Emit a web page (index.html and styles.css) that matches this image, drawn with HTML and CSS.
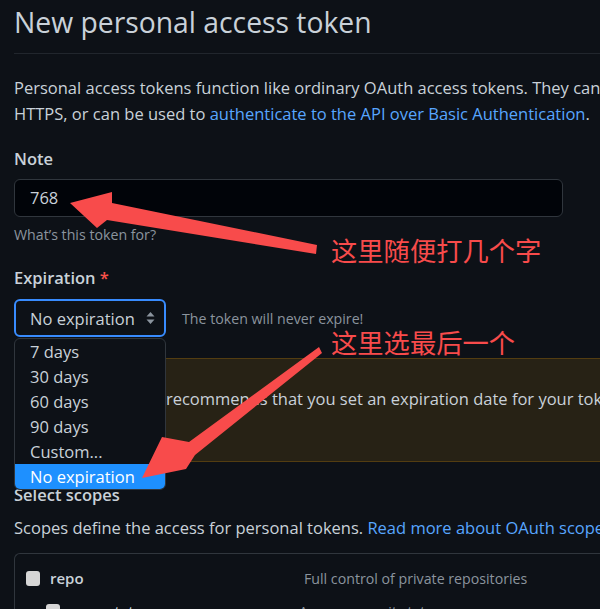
FILE: index.html
```html
<!DOCTYPE html>
<html lang="en">
<head>
<meta charset="utf-8">
<title>New personal access token</title>
<link rel="stylesheet" href="styles.css">
</head>
<body>
<div class="page">
  <div class="subhead"><h1 class="subhead-title">New personal access token</h1></div>
  <p class="intro">Personal access tokens function like ordinary OAuth access tokens. They can be used instead of a password for Git over<br>HTTPS, or can be used to <a class="link" href="#">authenticate to the API over Basic Authentication</a>.</p>

  <div class="field field-note">
    <div class="label">Note</div>
    <div class="input">768</div>
    <div class="hint hint-note">What’s this token for?</div>
  </div>

  <div class="field field-exp">
    <div class="label">Expiration <span class="req">*</span></div>
    <div class="select-row">
      <div class="select-wrap">
        <div class="select">
          <span>No expiration</span>
          <svg class="select-icon" width="9" height="14" viewBox="0 0 9 14"><path d="M4.5 1 L8.5 5.5 L0.5 5.5 Z M4.5 13 L8.5 8.5 L0.5 8.5 Z" fill="#8b949e"/></svg>
        </div>
        <ul class="menu">
          <li class="menu-item">7 days</li>
          <li class="menu-item">30 days</li>
          <li class="menu-item">60 days</li>
          <li class="menu-item">90 days</li>
          <li class="menu-item">Custom...</li>
          <li class="menu-item selected">No expiration</li>
        </ul>
      </div>
      <span class="hint">The token will never expire!</span>
    </div>
  </div>

  <div class="flash">GitHub strongly recommends that you set an expiration date for your token to help keep your information secure.</div>

  <div class="label label-scopes">Select scopes</div>
  <p class="scopes-desc">Scopes define the access for personal tokens. <a class="link" href="#">Read more about OAuth scopes.</a></p>

  <div class="scopes">
    <div class="scope-row">
      <span class="check"></span>
      <span class="scope-name">repo</span>
      <span class="scope-info">Full control of private repositories</span>
    </div>
    <div class="scope-row child">
      <span class="check"></span>
      <span class="scope-name normal">repo:status</span>
      <span class="scope-info">Access commit status</span>
    </div>
  </div>
</div>

<svg class="annot" width="600" height="609" viewBox="0 0 600 609">
  <polygon points="70,203 112,192 112,203 317,245 316,254 107,220 97,228" fill="#f84b4b"/>
  <polygon points="319,347 322,353 195,455 186,469 142,478 162,437 189,442" fill="#f84b4b"/>
</svg>
<div class="note note-1">这里随便打几个字</div>
<div class="note note-2">这里选最后一个</div>
</body>
</html>
```
FILE: styles.css
```css
html, body {
  margin: 0;
  padding: 0;
}
body {
  background: #0d1117;
  color: #c9d1d9;
  font-family: "Open Sans", "Noto Sans", sans-serif;
  font-size: 16.5px;
  width: 600px;
  height: 609px;
  overflow: hidden;
  position: relative;
}
.page {
  width: 1000px;
  padding-left: 14px;
}
.subhead {
  border-bottom: 1px solid #21262d;
  padding-bottom: 9px;
}
.subhead-title {
  margin: 0;
  font-size: 28.3px;
  font-weight: 400;
  line-height: 44px;
  color: #c9d1d9;
}
.intro {
  margin: 21px 0 0;
  line-height: 26px;
  white-space: nowrap;
}
.link {
  color: #58a6ff;
  text-decoration: none;
}
.label {
  font-weight: 600;
  line-height: 26px;
}
.field-note {
  margin-top: 19px;
}
.input {
  margin-top: 7px;
  width: 549px;
  height: 38px;
  box-sizing: border-box;
  background: #010409;
  border: 1px solid #30363d;
  border-radius: 6px;
  padding: 0 15px;
  line-height: 36px;
}
.hint {
  font-size: 14.2px;
  color: #8b949e;
}
.hint-note {
  margin-top: 7px;
  line-height: 22px;
}
.field-exp {
  margin-top: 19px;
}
.req {
  color: #f85149;
}
.select-row {
  margin-top: 8px;
  display: flex;
  align-items: center;
  gap: 16px;
}
.select-wrap {
  position: relative;
  z-index: 5;
}
.select {
  width: 152px;
  height: 38px;
  box-sizing: border-box;
  border: 2px solid #388bfd;
  border-radius: 6px;
  background: #0d1117;
  display: flex;
  align-items: center;
  justify-content: space-between;
  padding: 0 9px 0 14px;
}
.select-icon {
  display: block;
}
.menu {
  position: absolute;
  left: 0;
  top: 39px;
  width: 152px;
  box-sizing: border-box;
  margin: 0;
  padding: 0;
  list-style: none;
  background: #0d1117;
  border: 1px solid #30363d;
  border-radius: 6px;
  overflow: hidden;
}
.menu-item {
  height: 25px;
  line-height: 25px;
  padding-left: 15px;
}
.menu-item.selected {
  background: #1e90ff;
  color: #ffffff;
}
.flash {
  margin-top: 21px;
  background: #272215;
  border: 1px solid #533d11;
  border-right: 0;
  padding: 27px 0 49px 26px;
  line-height: 26px;
  white-space: nowrap;
}
.label-scopes {
  margin-top: 20px;
}
.scopes-desc {
  margin: 7px 0 0;
  line-height: 26px;
  white-space: nowrap;
}
.scopes {
  margin-top: 12px;
  border: 1px solid #30363d;
  border-right: 0;
  border-radius: 6px 0 0 6px;
  padding-top: 12px;
}
.scope-row {
  display: grid;
  grid-template-columns: 24px 254px 1fr;
  align-items: center;
  height: 24px;
  padding-left: 11px;
  margin-bottom: 9px;
}
.scope-row.child {
  padding-left: 31px;
  grid-template-columns: 25px 228px 1fr;
}
.check {
  width: 14px;
  height: 15px;
  background: #d6d6d6;
  border-radius: 3px;
}
.scope-name {
  font-weight: 600;
  font-size: 15px;
}
.scope-name.normal {
  font-weight: 400;
}
.scope-info {
  font-size: 14.2px;
  color: #8b949e;
}
.annot {
  position: absolute;
  left: 0;
  top: 0;
  z-index: 10;
  pointer-events: none;
}
.note {
  position: absolute;
  left: 331px;
  z-index: 11;
  font-family: "Noto Sans CJK SC", sans-serif;
  font-size: 26.3px;
  line-height: 26px;
  color: #f84b4b;
  white-space: nowrap;
}
.note-1 {
  top: 237px;
}
.note-2 {
  top: 329px;
}
```
